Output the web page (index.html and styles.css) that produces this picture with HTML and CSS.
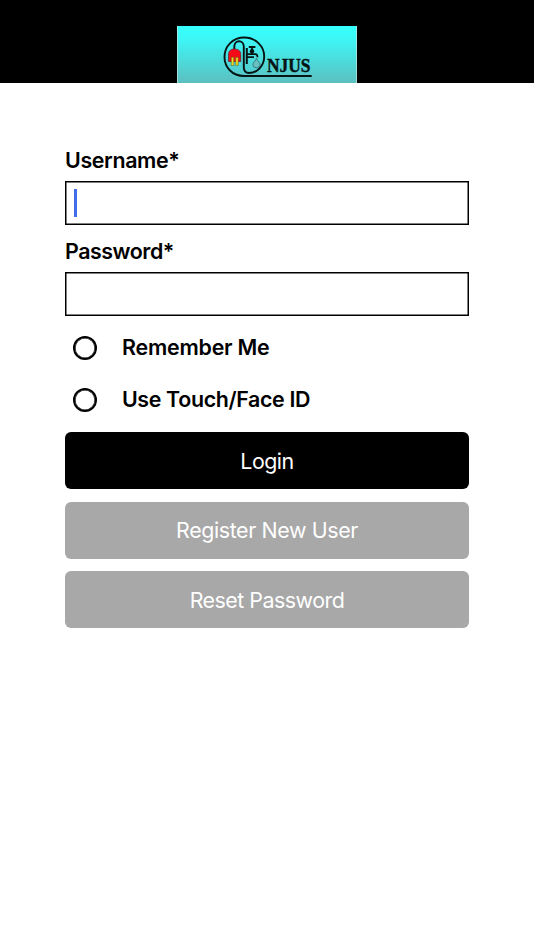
FILE: index.html
```html
<!DOCTYPE html>
<html lang="en">
<head>
<meta charset="utf-8">
<title>Login</title>
<link rel="stylesheet" href="styles.css">
</head>
<body>
<header class="header">
  <svg class="logo" viewBox="177 26 180 57" role="img" aria-label="NJUS">
    <defs>
      <linearGradient id="sky" x1="0" y1="0" x2="0" y2="1">
        <stop offset="0" stop-color="#35ffff"/>
        <stop offset="0.2" stop-color="#3bf8f7"/>
        <stop offset="1" stop-color="#5dbfc0"/>
      </linearGradient>
    </defs>
    <rect x="177" y="26" width="180" height="57" fill="url(#sky)"/>
    <path d="M177.4 26v57M356.6 26v57" stroke="#c5e5e5" stroke-width=".8"/>
    <g fill="none" stroke="#071414">
      <path d="M311.700 76H244C232 76 224.500 67 224.500 57C224.500 46 233 37.500 244.300 37.500C255.500 37.500 264.200 46 264.200 56.500C264.200 66 257 73 249 73C245 73 243.800 71 243.800 67V46.500C243.800 39.500 234.300 39.500 234.300 46.500V49" stroke-width="1.9"/>
      <path d="M246.800 48v16" stroke-width="2"/>
      <path d="M247 54.200h8.300c1.800 0 2.200 1 2.200 3M247 57.200h7" stroke-width="1.700"/>
      <path d="M248.800 47h6.600M252 47v7" stroke-width="1.800"/>
    </g>
    <circle cx="252" cy="51.200" r="2.200" fill="#071414"/>
    <path d="M256.500 58C255.600 61.500 252.900 62.500 252.900 64.500a3.600 3.300 0 0 0 7.200 0C260.100 62.500 257.400 61.500 256.500 58Z" fill="#69bfc2" stroke="#35777a" stroke-width=".9"/>
    <path d="M228.500 61.500V53.500Q229.200 49 234.500 49Q240 49 240.700 53.500V61.500Z" fill="#f50a18" stroke="#651923" stroke-width=".7"/>
    <path d="M231.300 57.200h2.500v8.400h-2.500ZM235.700 57.200h2.500v8.400h-2.500Z" fill="#f0dc20" stroke="#55501d" stroke-width=".5"/>
    <text class="logo-name" x="267" y="71.700" textLength="43.500" lengthAdjust="spacingAndGlyphs">NJUS</text>
  </svg>
</header>
<main class="form">
  <label class="label" for="user">Username*</label>
  <div class="field" id="user"><span class="caret"></span></div>
  <label class="label label-password" for="pass">Password*</label>
  <div class="field" id="pass"></div>
  <div class="option remember"><span class="radio"></span><span class="option-text">Remember Me</span></div>
  <div class="option"><span class="radio"></span><span class="option-text touch">Use Touch/Face ID</span></div>
  <div class="actions">
    <button class="button primary">Login</button>
    <button class="button register">Register New User</button>
    <button class="button reset">Reset Password</button>
  </div>
</main>
</body>
</html>
```
FILE: styles.css
```css
* { box-sizing: border-box; }
body {
  margin: 0;
  min-height: 950px;
  background: #fff;
  color: #000;
  font-family: Inter, "Liberation Sans", sans-serif;
}
.header {
  height: 83px;
  padding-top: 26px;
  background: #000;
  display: flex;
  justify-content: center;
}
.logo { display: block; width: 180px; height: 57px; }
.logo-name { font: bold 17.8px "Liberation Serif", serif; fill: #071414; stroke: #071414; stroke-width: .4px; }
.form { width: 404px; margin: 0 auto; padding-top: 62px; }
.label {
  display: block;
  height: 36px;
  font-size: 21.4px;
  line-height: 31px;
  font-weight: 600;
  letter-spacing: -.35px;
}
.field {
  height: 44px;
  display: flex;
  align-items: center;
  padding-left: 9px;
  box-shadow: inset 0 0 0 1.5px #000;
}
.label-password { margin-top: 11px; letter-spacing: -.45px; }
.caret { width: 2.6px; height: 28px; background: #416fec; }
.option { height: 51.5px; display: flex; align-items: center; padding-left: 8.400px; }
.remember { margin-top: 6.5px; }
.radio { width: 24px; height: 24px; margin-right: 24.600px; border: 2px solid #000; border-radius: 50%; box-shadow: inset 0 0 0 .6px #000; }
.option-text { font-size: 21.4px; font-weight: 600; line-height: 28px; letter-spacing: -.2px; }
.remember .option-text { margin-top: -2px; }
.touch { letter-spacing: -.35px; margin-top: -1px; }
.actions { margin-top: 6.5px; display: flex; flex-direction: column; gap: 12.6px; }
.button {
  height: 57px;
  padding: 0;
  border: 0;
  border-radius: 6px;
  background: #a8a8a8;
  color: #fff;
  font: 400 21.4px/57px Inter, "Liberation Sans", sans-serif;
  letter-spacing: -.5px;
}
.primary { background: #000; padding-top: 1px; }
.register { letter-spacing: -.38px; }
.reset { padding-top: 1px; }
```
